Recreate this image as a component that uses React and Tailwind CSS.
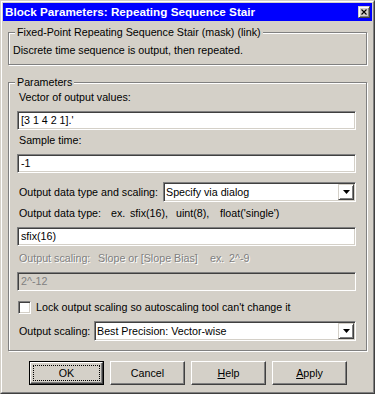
import React from "react";

const sunken =
  "border border-t-[#808080] border-l-[#808080] border-b-white border-r-white shadow-[inset_1px_1px_0_#404040,inset_-1px_-1px_0_#d4d0c8]";
const raised =
  "border border-t-white border-l-white border-b-[#404040] border-r-[#404040] shadow-[inset_-1px_-1px_0_#808080]";
const raisedBtn =
  "border border-t-[#d4d0c8] border-l-[#d4d0c8] border-b-[#404040] border-r-[#404040] shadow-[inset_1px_1px_0_#fff,inset_-1px_-1px_0_#808080]";
const etched =
  "relative border border-[#808080] shadow-[inset_1px_1px_0_#fff,1px_1px_0_#fff]";

function Field({ children, disabled }) {
  return (
    <div
      className={`h-[19px] ${sunken} ${
        disabled ? "bg-[#d4d0c8] text-[#808080]" : "bg-white text-black"
      } flex items-center pl-[3px] leading-[13px] whitespace-pre`}
    >
      {children}
    </div>
  );
}

function Combo({ children }) {
  return (
    <div className={`flex-1 h-[20px] ${sunken} bg-white flex items-center p-px`}>
      <div className="flex-1 pl-px leading-[13px] whitespace-pre">{children}</div>
      <div className={`w-[16px] h-[16px] ${raisedBtn} flex items-center justify-center`}>
        <svg width="7" height="4" viewBox="0 0 7 4" className="block">
          <polygon points="0,0 7,0 3.5,4" fill="#000" />
        </svg>
      </div>
    </div>
  );
}

function Label({ children, disabled }) {
  return (
    <div
      className={`h-[13px] leading-[13px] pl-[2px] flex whitespace-pre ${
        disabled ? "text-[#808080] [text-shadow:1px_1px_0_#fff]" : "text-black"
      }`}
    >
      {children}
    </div>
  );
}

function Button({ children }) {
  return (
    <div className={`w-[75px] h-[24px] ${raised} flex items-center justify-center leading-[13px]`}>
      {children}
    </div>
  );
}

export default function App() {
  return (
    <div className="w-[375px] h-[394px] bg-[#d4d0c8] text-[10.7px] text-black font-['Liberation_Sans',Arial,sans-serif] border border-t-[#d4d0c8] border-l-[#d4d0c8] border-b-[#404040] border-r-[#404040]">
      <div className="h-full border border-t-white border-l-white border-b-[#808080] border-r-[#808080] p-px flex flex-col">
        {/* Title bar */}
        <div className="h-[18px] bg-[#0000ff] flex items-center justify-between pl-[2px] pr-[2px] shrink-0">
          <span className="text-white font-bold text-[11.7px] leading-[14px] whitespace-nowrap">
            Block Parameters: Repeating Sequence Stair
          </span>
          <div className={`w-[12px] h-[12px] bg-[#d4d0c8] ${raisedBtn} flex items-center justify-center`}>
            <svg width="6" height="6" viewBox="0 0 6 6" className="block">
              <path d="M0.5 0.5 L5.5 5.5 M5.5 0.5 L0.5 5.5" stroke="#000" strokeWidth="1.1" />
            </svg>
          </div>
        </div>

        {/* Body */}
        <div className="flex flex-col px-[5px]">
          {/* Group 1 */}
          <div className={`mt-[11px] h-[33px] ${etched}`}>
            <span className="absolute -top-[7px] left-[6px] px-[2px] bg-[#d4d0c8] leading-[13px] whitespace-nowrap">
              Fixed-Point Repeating Sequence Stair (mask) (link)
            </span>
            <div className="pt-[11px] pl-[4px] leading-[13px] whitespace-nowrap">
              Discrete time sequence is output, then repeated.
            </div>
          </div>

          {/* Parameters */}
          <div className={`mt-[17px] h-[269px] ${etched} pl-[8px] pr-[10px] pt-[8px] flex flex-col`}>
            <span className="absolute -top-[7px] left-[6px] px-[2px] bg-[#d4d0c8] leading-[13px]">
              Parameters
            </span>

            <Label>Vector of output values:</Label>
            <div className="mt-[7px]">
              <Field>[3 1 4 2 1].'</Field>
            </div>

            <div className="mt-[4px]">
              <Label>Sample time:</Label>
            </div>
            <div className="mt-[7px]">
              <Field>-1</Field>
            </div>

            <div className="mt-[9px] flex items-center">
              <div className="w-[146px] pl-[2px] leading-[13px] whitespace-nowrap">
                Output data type and scaling:
              </div>
              <Combo>Specify via dialog</Combo>
            </div>

            <div className="mt-[5px]">
              <Label>
                <span className="w-[92px] shrink-0">Output data type:</span>
                <span className="w-[19px] shrink-0">ex.</span>
                <span className="w-[46px] shrink-0">sfix(16),</span>
                <span className="w-[44px] shrink-0">uint(8),</span>
                <span>float('single')</span>
              </Label>
            </div>
            <div className="mt-[7px]">
              <Field>sfix(16)</Field>
            </div>

            <div className="mt-[6px]">
              <Label disabled>
                <span className="w-[79px] shrink-0">Output scaling:</span>
                <span className="w-[112px] shrink-0">Slope or [Slope Bias]</span>
                <span className="w-[19px] shrink-0">ex.</span>
                <span>2^-9</span>
              </Label>
            </div>
            <div className="mt-[7px]">
              <Field disabled>2^-12</Field>
            </div>

            <div className="mt-[10px] h-[13px] flex items-center pl-px gap-[5px]">
              <div className={`w-[13px] h-[13px] shrink-0 bg-white ${sunken}`} />
              <span className="leading-[13px] whitespace-nowrap">
                Lock output scaling so autoscaling tool can't change it
              </span>
            </div>

            <div className="mt-[7px] flex items-center">
              <div className="w-[77px] shrink-0 pl-[2px] leading-[13px] whitespace-nowrap">Output scaling:</div>
              <Combo>Best Precision: Vector-wise</Combo>
            </div>
          </div>

          {/* Buttons */}
          <div className="mt-[10px] pl-[21px] flex gap-[6px]">
            <div className="w-[75px] h-[24px] border border-black">
              <div className={`h-full ${raised} p-[2px]`}>
                <div className="h-full border border-dotted border-black flex items-center justify-center leading-[13px]">
                  OK
                </div>
              </div>
            </div>
            <Button>Cancel</Button>
            <Button>
              <span>
                <span className="underline">H</span>elp
              </span>
            </Button>
            <Button>
              <span>
                <span className="underline">A</span>pply
              </span>
            </Button>
          </div>
        </div>
      </div>
    </div>
  );
}
